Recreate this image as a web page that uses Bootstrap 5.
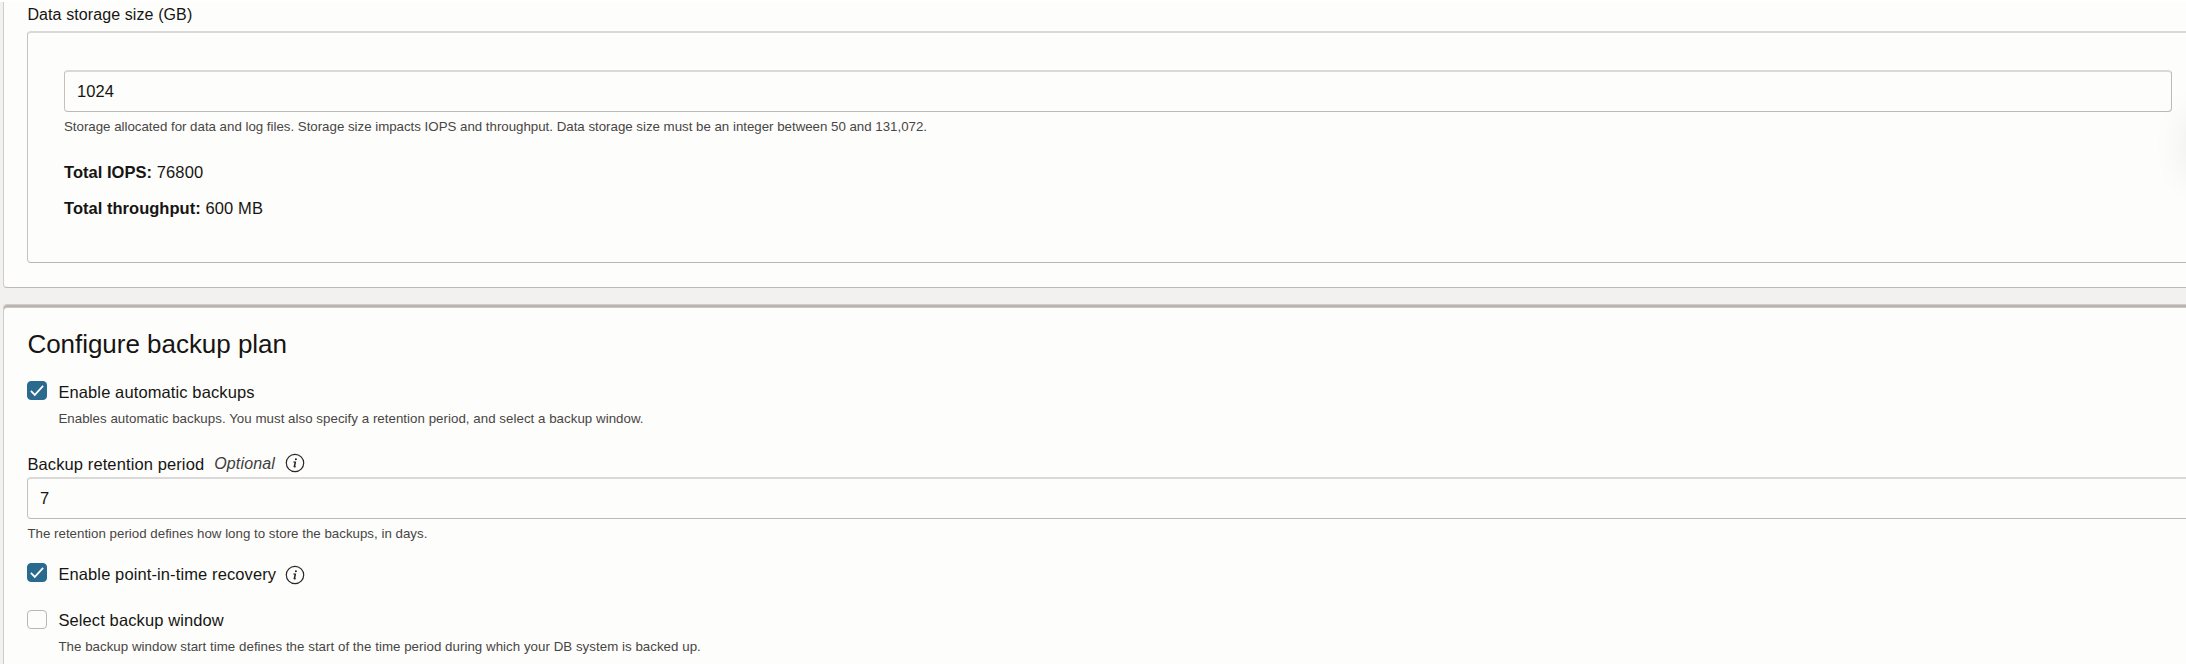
<!DOCTYPE html>
<html lang="en">
<head>
<meta charset="utf-8">
<meta name="viewport" content="width=device-width, initial-scale=1">
<title>Create DB system</title>
<link href="https://cdn.jsdelivr.net/npm/bootstrap@5.3.0/dist/css/bootstrap.min.css" rel="stylesheet">
<style>
  body { font: 16px/20px "Liberation Sans", Arial, sans-serif; color: #161513; background: #fff; }
  .page-wrap { height: 664px; padding: 2px 0 0 3px; background: linear-gradient(#fff 2px, #f2f1ef 2px); }
  .panel { background: #fdfdfb; border: 1px solid #bcb9b6; border-left-color: #cfcdcb; border-right: 0; padding-left: 23px; }
  .panel-storage { height: 286px; border-top: 0; border-bottom-left-radius: 4px; padding-top: 3px; }
  .panel-backup { height: 376px; margin-top: 16px; border-bottom: 0; border-top-color: #d0ccc9; border-top-left-radius: 4px;
    box-shadow: inset 0 2px #bab3ae, inset 0 3px #cac6c3; padding-top: 23px; }
  .storage-box { height: 232px; margin-top: 6px; padding: 37px 14px 0 36px; border: 1px solid #bcb6b3; border-top: 2px solid #dad9d7;
    border-left-color: #c6c4c2; border-right: 0; border-radius: 4px 0 0 4px; }
  .form-control.field { height: 42px; padding: 0 12px 1px; font-size: 16.5px; line-height: 20px; color: #161513; background: #fdfdfb;
    border: 1px solid #bcb9b7; border-top: 2px solid #dad9d7; border-left-color: #c4c0be; border-radius: 4px; letter-spacing: .1px; }
  .form-control.field-open { border-right: 0; border-radius: 4px 0 0 4px; }
  .hint { font-size: 13.3px; line-height: 16px; color: #484644; letter-spacing: .036px; white-space: nowrap; margin-top: 7px; }
  .check-row .hint { margin-top: 9px; }
  .hint-storage { letter-spacing: -.013px; }
  .hint-days { letter-spacing: .012px; padding-left: .4px; }
  .t-wide { font-size: 16.5px; letter-spacing: .11px; }
  .t-label { letter-spacing: .1px; padding-left: .4px; }
  .t-optional { color: #403e3c; letter-spacing: .16px; }
  .totals { font-size: 16.5px; letter-spacing: .03px; }
  .totals span { letter-spacing: .15px; }
  .panel-title { font-size: 26px; line-height: 32px; font-weight: 400; letter-spacing: -.03px; margin: 0 0 0 .4px; }
  .form-check-input.box { width: 20px; height: 19px; margin: 0; float: none; flex: none; border: 1px solid #bab7b5; border-radius: 4px; background-color: #fdfdfb; }
  .form-check-input.box:checked { background-color: #2b6a8f; border-color: #2b6a8f;
    background-image: url("data:image/svg+xml,%3csvg xmlns='http://www.w3.org/2000/svg' viewBox='0 0 20 20'%3e%3cpath fill='none' stroke='%23fff' stroke-width='2' d='M2.8 10.4 7.4 15.2 17.2 4.6'/%3e%3c/svg%3e"); background-size: 100% 100%; }
  .check-row { gap: 11.4px; }
  .info { width: 20px; height: 20px; flex: none; }
  .floating-help { position: absolute; left: 100%; top: 115px; width: 50px; height: 62px; border-radius: 8px; box-shadow: 0 0 36px rgba(20,20,40,.075); }
</style>
</head>
<body>
<svg class="d-none" xmlns="http://www.w3.org/2000/svg">
  <symbol id="info-icon" viewBox="0 0 20 20">
    <circle cx="10" cy="10" r="8.7" fill="none" stroke="#2b2927" stroke-width="1.2"/>
    <circle cx="10.9" cy="6.3" r="1.05" fill="#2b2927"/>
    <path d="M8.3 9.1h2.2M9.3 13.6q0 .7.6.5l1-.6" fill="none" stroke="#2b2927" stroke-width="1"/>
    <path d="M10.4 8.7 9.3 14.1" fill="none" stroke="#2b2927" stroke-width="1.6"/>
  </symbol>
</svg>
<main class="page-wrap position-relative overflow-hidden">
  <section class="panel panel-storage">
    <label class="t-label d-block" for="storage">Data storage size (GB)</label>
    <div class="storage-box">
      <input class="form-control field" id="storage" type="text" value="1024">
      <div class="hint hint-storage">Storage allocated for data and log files. Storage size impacts IOPS and throughput. Data storage size must be an integer between 50 and 131,072.</div>
      <div class="totals" style="margin-top:27px"><strong>Total IOPS:</strong> <span>76800</span></div>
      <div class="totals mt-3"><strong>Total throughput:</strong> <span>600 MB</span></div>
    </div>
  </section>

  <section class="panel panel-backup">
    <h2 class="panel-title">Configure backup plan</h2>
    <div class="d-flex check-row" style="margin-top:21px">
      <input class="form-check-input box" id="auto" type="checkbox" checked>
      <div>
        <label class="t-wide d-block" for="auto" style="margin-top:1px">Enable automatic backups</label>
        <div class="hint">Enables automatic backups. You must also specify a retention period, and select a backup window.</div>
      </div>
    </div>
    <div class="d-flex" style="margin-top:27px">
      <label class="t-wide" for="retention" style="padding-left:.4px">Backup retention period</label>
      <em class="t-label t-optional" style="margin-left:9.6px">Optional</em>
      <svg class="info" style="margin:-1px 0 0 9.6px"><use href="#info-icon"/></svg>
    </div>
    <input class="form-control field field-open" id="retention" type="text" value="7" style="margin-top:3px">
    <div class="hint hint-days">The retention period defines how long to store the backups, in days.</div>
    <div class="d-flex check-row" style="margin-top:21px">
      <input class="form-check-input box" id="pitr" type="checkbox" checked>
      <div class="d-flex" style="margin-top:1px">
        <label class="t-wide" for="pitr">Enable point-in-time recovery</label>
        <svg class="info" style="margin:1px 0 -1px 9px"><use href="#info-icon"/></svg>
      </div>
    </div>
    <div class="d-flex check-row" style="margin-top:26px">
      <input class="form-check-input box" id="window" type="checkbox">
      <div>
        <label class="t-wide d-block" for="window">Select backup window</label>
        <div class="hint">The backup window start time defines the start of the time period during which your DB system is backed up.</div>
      </div>
    </div>
  </section>
  <div class="floating-help"></div>
</main>
<script src="https://cdn.jsdelivr.net/npm/bootstrap@5.3.0/dist/js/bootstrap.bundle.min.js"></script>
</body>
</html>
